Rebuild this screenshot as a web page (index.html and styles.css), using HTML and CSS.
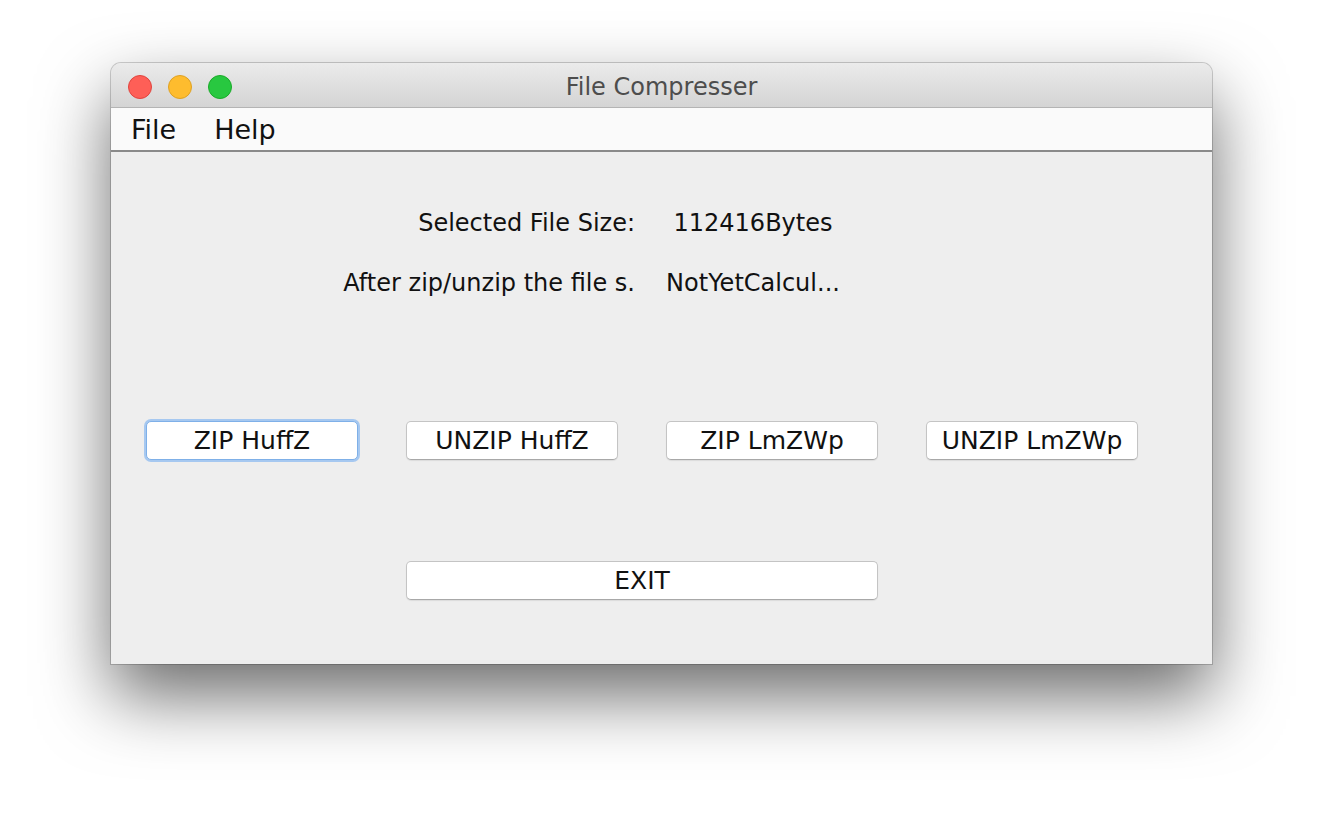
FILE: index.html
```html
<!DOCTYPE html>
<html>
<head>
<meta charset="utf-8">
<title>File Compresser</title>
<link rel="stylesheet" href="styles.css">
</head>
<body>
<div class="window">
  <div class="titlebar">
    <div class="lights">
      <span class="light red"></span>
      <span class="light yellow"></span>
      <span class="light green"></span>
    </div>
    <div class="title">File Compresser</div>
  </div>
  <div class="menubar">
    <span class="menu">File</span>
    <span class="menu">Help</span>
  </div>
  <div class="content">
    <div class="info">
      <div class="label">Selected File Size:</div>
      <div class="value">112416Bytes</div>
      <div class="label">After zip/unzip the file s.</div>
      <div class="value">NotYetCalcul...</div>
    </div>
    <div class="buttons">
      <button class="btn focused">ZIP HuffZ</button>
      <button class="btn">UNZIP HuffZ</button>
      <button class="btn">ZIP LmZWp</button>
      <button class="btn">UNZIP LmZWp</button>
    </div>
    <div class="exit-row">
      <button class="btn exit">EXIT</button>
    </div>
  </div>
</div>
</body>
</html>
```
FILE: styles.css
```css
html, body {
  margin: 0;
  background: #ffffff;
}
body {
  padding: 63px 0 0 111px;
  width: 1324px;
  height: 824px;
  box-sizing: border-box;
  overflow: hidden;
  font-family: "DejaVu Sans", "Liberation Sans", sans-serif;
}
.window {
  width: 1101px;
  height: 601px;
  border-radius: 10px 10px 0 0;
  box-shadow: 0 0 0 1px rgba(0,0,0,0.18), 0 32px 70px rgba(0,0,0,0.58);
  display: flex;
  flex-direction: column;
  overflow: hidden;
  background: #eeeeee;
}
.titlebar {
  height: 45px;
  flex: none;
  box-sizing: border-box;
  padding-top: 4px;
  background: linear-gradient(#ebebeb, #d4d4d4);
  border-bottom: 1px solid #b4b4b4;
  display: flex;
  align-items: center;
  position: relative;
}
.lights {
  display: flex;
  gap: 16px;
  padding-left: 17px;
}
.light {
  width: 24px;
  height: 24px;
  border-radius: 50%;
  box-sizing: border-box;
}
.red { background: #fe5f57; border: 1px solid #e0443e; }
.yellow { background: #febc2e; border: 1px solid #dea123; }
.green { background: #28c840; border: 1px solid #1aab29; }
.title {
  position: absolute;
  left: 0; right: 0; top: 4px; bottom: 0;
  display: flex;
  align-items: center;
  justify-content: center;
  font-size: 24px;
  color: #4d4d4d;
  pointer-events: none;
}
.menubar {
  height: 42px;
  flex: none;
  background: #fafafa;
  border-bottom: 2px solid #8a8a8a;
  display: flex;
  align-items: center;
  padding-left: 20px;
  gap: 38px;
  font-size: 27px;
  color: #111;
}
.content {
  flex: 1;
  display: flex;
  flex-direction: column;
}
.info {
  display: grid;
  grid-template-columns: 524px 236px;
  grid-auto-rows: 60px;
  margin-top: 41px;
  font-size: 24px;
  color: #111;
  align-items: center;
}
.label {
  text-align: right;
  white-space: nowrap;
}
.value {
  text-align: center;
  white-space: nowrap;
}
.buttons {
  display: flex;
  gap: 48px;
  padding-left: 35px;
  margin-top: 108px;
}
.btn {
  width: 212px;
  height: 39px;
  background: #ffffff;
  border: 1px solid #c4c4c4;
  border-bottom-color: #a8a8a8;
  border-radius: 5px;
  box-shadow: 0 1px 1px rgba(0,0,0,0.08);
  font-family: "DejaVu Sans", "Liberation Sans", sans-serif;
  font-size: 25px;
  color: #111;
  padding: 0;
}
.btn.focused {
  border: 1px solid #7fb0e8;
  box-shadow: 0 0 0 2px #a6c8f0;
}
.exit-row {
  padding-left: 295px;
  margin-top: 101px;
}
.btn.exit {
  width: 472px;
}
```
